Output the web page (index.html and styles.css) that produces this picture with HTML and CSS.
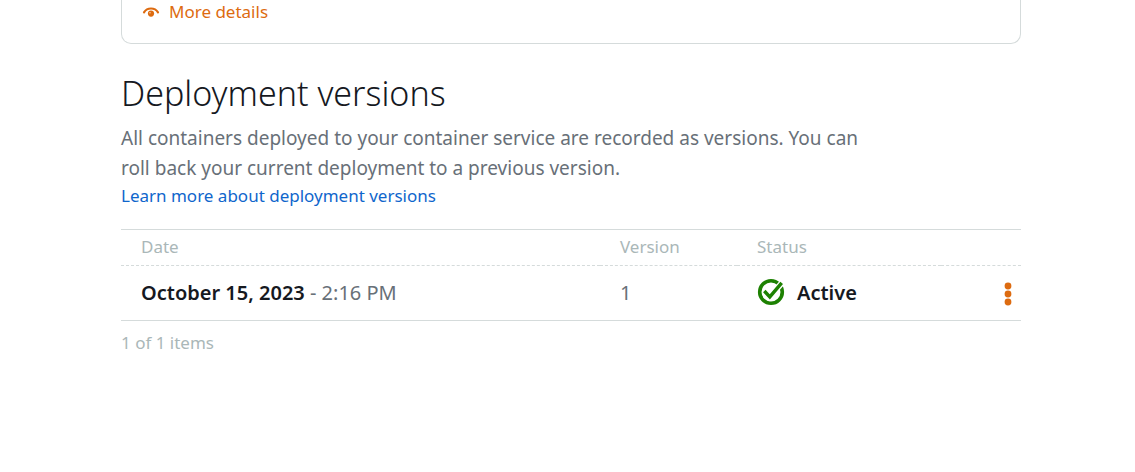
FILE: index.html
```html
<!DOCTYPE html>
<html lang="en">
<head>
<meta charset="utf-8">
<title>Deployment versions</title>
<link rel="stylesheet" href="styles.css">
</head>
<body>
<main class="page">
  <section class="card">
    <a class="more" href="#details">
      <svg class="eye" viewBox="0 0 18 12" aria-hidden="true">
        <path d="M2 6.3C5.2 1.2 12.8 1.2 16 6.3" fill="none" stroke="currentColor" stroke-width="2.2" stroke-linecap="round"/>
        <circle cx="9" cy="7.6" r="3.1" fill="currentColor"/>
        <circle cx="8" cy="6.8" r="0.8" fill="#f6c9a5"/>
      </svg>
      <span>More details</span>
    </a>
  </section>

  <section class="versions">
    <h1 class="title">Deployment versions</h1>
    <p class="intro">All containers deployed to your container service are recorded as versions. You can roll back your current deployment to a previous version.</p>
    <a class="learn" href="#learn">Learn more about deployment versions</a>

    <table class="table">
      <colgroup><col class="col-date"><col class="col-version"><col class="col-status"><col class="col-menu"></colgroup>
      <thead>
        <tr><th scope="col">Date</th><th scope="col">Version</th><th scope="col">Status</th><td></td></tr>
      </thead>
      <tbody>
        <tr>
          <td><strong>October 15, 2023</strong> - 2:16 PM</td>
          <td>1</td>
          <td>
            <div class="status">
              <svg class="check" viewBox="0 0 28 28" aria-hidden="true">
                <circle cx="14" cy="14" r="11.3" fill="none" stroke="#1d8102" stroke-width="3.6"/>
                <path d="M7.5 13.2l5.3 5.7L25 4.8" fill="none" stroke="#fff" stroke-width="6"/>
                <path d="M7.3 13l5.5 5.9L24.7 4.8" fill="none" stroke="#1d8102" stroke-width="3.4"/>
              </svg>
              <strong>Active</strong>
            </div>
          </td>
          <td class="menu-cell">
            <button class="menu" type="button" aria-label="Version actions">
              <svg class="dots" viewBox="0 0 8 24" aria-hidden="true" fill="currentColor">
                <circle cx="4" cy="4" r="3.4"/><circle cx="4" cy="12" r="3.4"/><circle cx="4" cy="20" r="3.4"/>
              </svg>
            </button>
          </td>
        </tr>
      </tbody>
    </table>
    <p class="count">1 of 1 items</p>
  </section>
</main>
</body>
</html>
```
FILE: styles.css
```css
* { box-sizing: border-box; }

body {
  margin: 0;
  padding: 0 16px 0 23px;
  background: #fff;
  color: #687078;
  font-family: "Noto Sans", "Open Sans", sans-serif;
  font-size: 19px;
}

a { text-decoration: none; }

.page {
  max-width: 900px;
  margin: 0 auto;
}

.card {
  padding: 0 20px 19px;
  border: 1px solid #d5dbdb;
  border-top: 0;
  border-radius: 0 0 10px 10px;
  line-height: 24px;
}

.more {
  display: inline-flex;
  align-items: center;
  gap: 9px;
  color: #dd6b10;
  font-size: 17px;
  vertical-align: top;
}

.eye { width: 18px; height: 12px; }

.title {
  margin: 24px 0 5px;
  color: #16191f;
  font-size: 34px;
  font-weight: 300;
  line-height: 50px;
}

.intro {
  max-width: 760px;
  margin: 0;
  line-height: 30px;
}

.learn {
  display: block;
  color: #0f66cc;
  font-size: 17px;
  line-height: 26px;
}

.table {
  width: 100%;
  margin-top: 20px;
  border-collapse: collapse;
  table-layout: fixed;
  border-top: 1px solid #d5dbdb;
  border-bottom: 1px solid #d5dbdb;
  font-size: 20px;
}

.col-version { width: 137px; }
.col-status { width: 204px; }
.col-menu { width: 80px; }

.table th,
.table td {
  padding: 0 0 2px 20px;
  text-align: left;
}

.table th {
  color: #aab7b8;
  font-size: 17px;
  font-weight: 400;
}

.table thead tr {
  height: 36px;
  border-bottom: 1px dashed #d5dbdb;
}

.table tbody tr { height: 55px; }

.table strong {
  color: #16191f;
  font-weight: 600;
}

.status {
  display: flex;
  align-items: center;
  gap: 12px;
}

.check { width: 28px; height: 28px; }

.table .menu-cell {
  padding-right: 9px;
  text-align: right;
}

.menu {
  padding: 0;
  border: 0;
  background: none;
  color: #dd6b10;
  vertical-align: middle;
  cursor: pointer;
}

.dots { display: block; width: 8px; height: 24px; }

.count {
  margin: 9px 0 0;
  color: #aab7b8;
  font-size: 17px;
  line-height: 26px;
}
```
